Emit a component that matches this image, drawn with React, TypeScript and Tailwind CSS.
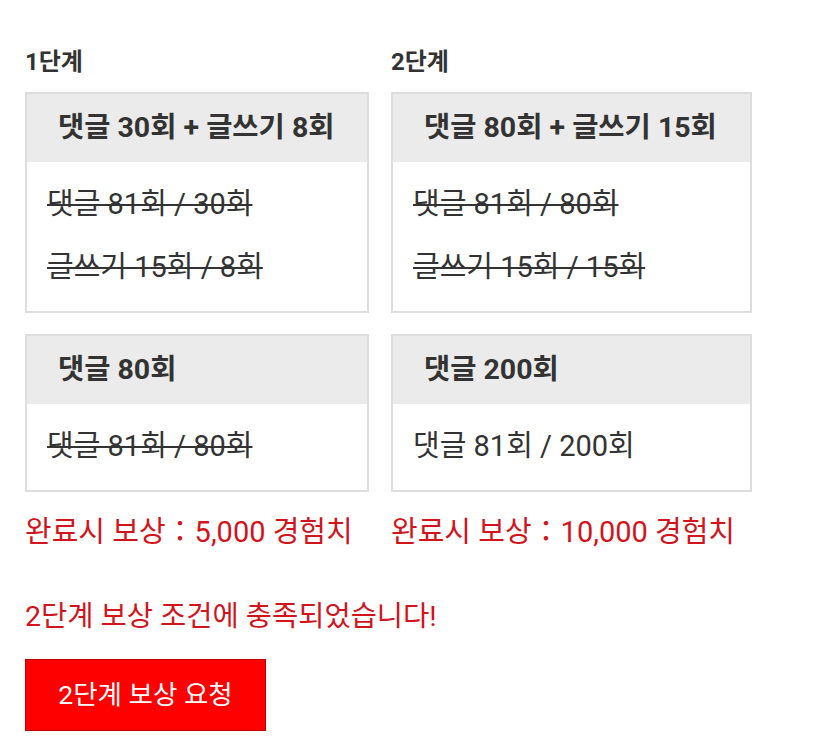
import React from "react";

const font = { fontFamily: '"Roboto", "Noto Sans CJK KR", sans-serif' };

function Box({
  width,
  title,
  lines,
  strike,
}: {
  width: string;
  title: string;
  lines: string[];
  strike: boolean;
}) {
  return (
    <div className={`${width} border-2 border-[#dddddd] bg-white`}>
      <div className="h-[68px] bg-[#ebebeb] flex items-center pl-[31px] text-[28.5px] font-bold text-[#333333]">
        {title}
      </div>
      <div className="pl-[20px] pt-[22px] pb-[23px] flex flex-col gap-[22px]">
        {lines.map((l) => (
          <div
            key={l}
            className={`text-[29px] leading-[41px] text-[#333333] whitespace-nowrap ${
              strike ? "line-through decoration-2" : ""
            }`}
          >
            {l}
          </div>
        ))}
      </div>
    </div>
  );
}

export default function App() {
  return (
    <div className="min-h-[739px] bg-white pl-[25px] pt-[47px]" style={font}>
      <div className="flex gap-[22px] items-start">
        <div className="w-[344px] flex flex-col">
          <div className="text-[24px] leading-[30px] font-bold text-[#333333] mb-[15px]">1단계</div>
          <Box
            width="w-[344px]"
            title="댓글 30회 + 글쓰기 8회"
            lines={["댓글 81회 / 30회", "글쓰기 15회 / 8회"]}
            strike
          />
          <div className="h-[21px]" />
          <Box width="w-[344px]" title="댓글 80회" lines={["댓글 81회 / 80회"]} strike />
          <div className="mt-[20px] text-[29px] leading-[40px] text-[#d2141c] whitespace-nowrap">
            완료시 보상：5,000 경험치
          </div>
        </div>
        <div className="w-[361px] flex flex-col">
          <div className="text-[24px] leading-[30px] font-bold text-[#333333] mb-[15px]">2단계</div>
          <Box
            width="w-[361px]"
            title="댓글 80회 + 글쓰기 15회"
            lines={["댓글 81회 / 80회", "글쓰기 15회 / 15회"]}
            strike
          />
          <div className="h-[21px]" />
          <Box width="w-[361px]" title="댓글 200회" lines={["댓글 81회 / 200회"]} strike={false} />
          <div className="mt-[20px] text-[29px] leading-[40px] text-[#d2141c] whitespace-nowrap">
            완료시 보상：10,000 경험치
          </div>
        </div>
      </div>
      <div className="mt-[45px] text-[28.5px] leading-[40px] text-[#d2141c]">
        2단계 보상 조건에 충족되었습니다!
      </div>
      <button className="mt-[22px] w-[241px] h-[72px] bg-[#ff0000] border border-[#c00000] text-white text-[26.5px] flex items-center justify-center">
        2단계 보상 요청
      </button>
    </div>
  );
}
